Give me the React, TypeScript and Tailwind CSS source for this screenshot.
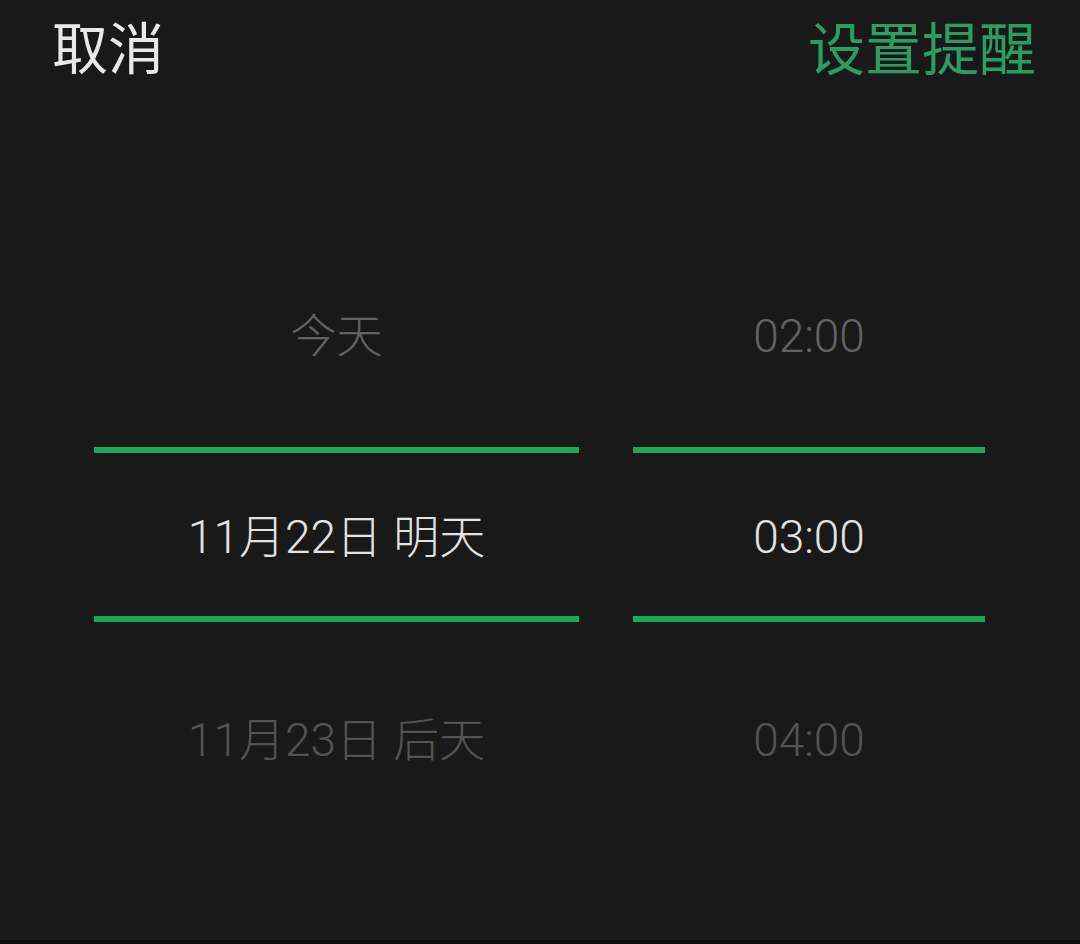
const dates = [
  { label: '今天', tone: 'text-[#626262]' },
  { label: '11月22日 明天', tone: 'text-[#e2e2e2]' },
  { label: '11月23日 后天', tone: 'text-[#525252]' },
]

const times = [
  { label: '02:00', tone: 'text-[#626262]' },
  { label: '03:00', tone: 'text-[#e2e2e2]' },
  { label: '04:00', tone: 'text-[#525252]' },
]

function Wheel({ items }: { items: { label: string; tone: string }[] }) {
  return (
    <div className="flex flex-col">
      <div className={`flex h-[224px] items-center justify-center pt-[2px] ${items[0].tone}`}>
        {items[0].label}
      </div>
      <div className="h-[6px] bg-[#1aa85a]" />
      <div className={`flex h-[163px] items-center justify-center pt-[4px] ${items[1].tone}`}>
        {items[1].label}
      </div>
      <div className="h-[6px] bg-[#1aa85a]" />
      <div className={`flex h-[236px] items-center justify-center ${items[2].tone}`}>
        {items[2].label}
      </div>
    </div>
  )
}

export default function App() {
  return (
    <div className="flex h-[944px] w-[1080px] flex-col bg-[#191919] font-['Roboto','Noto_Sans_CJK_SC',sans-serif]">
      <header className="flex h-[100px] items-center justify-between pl-[52px] pr-[44px] leading-none">
        <button className="text-[56px] text-[#e8e8e8]">取消</button>
        <button className="text-[57px] text-[#2a9e62]">设置提醒</button>
      </header>

      <div className="mt-[123px] grid grid-cols-[485px_352px] gap-[54px] pl-[94px] text-[46px] font-light leading-none">
        <Wheel items={dates} />
        <Wheel items={times} />
      </div>

      <div className="flex-1" />
      <div className="h-[4px] bg-[#0e0e0e]" />
    </div>
  )
}
